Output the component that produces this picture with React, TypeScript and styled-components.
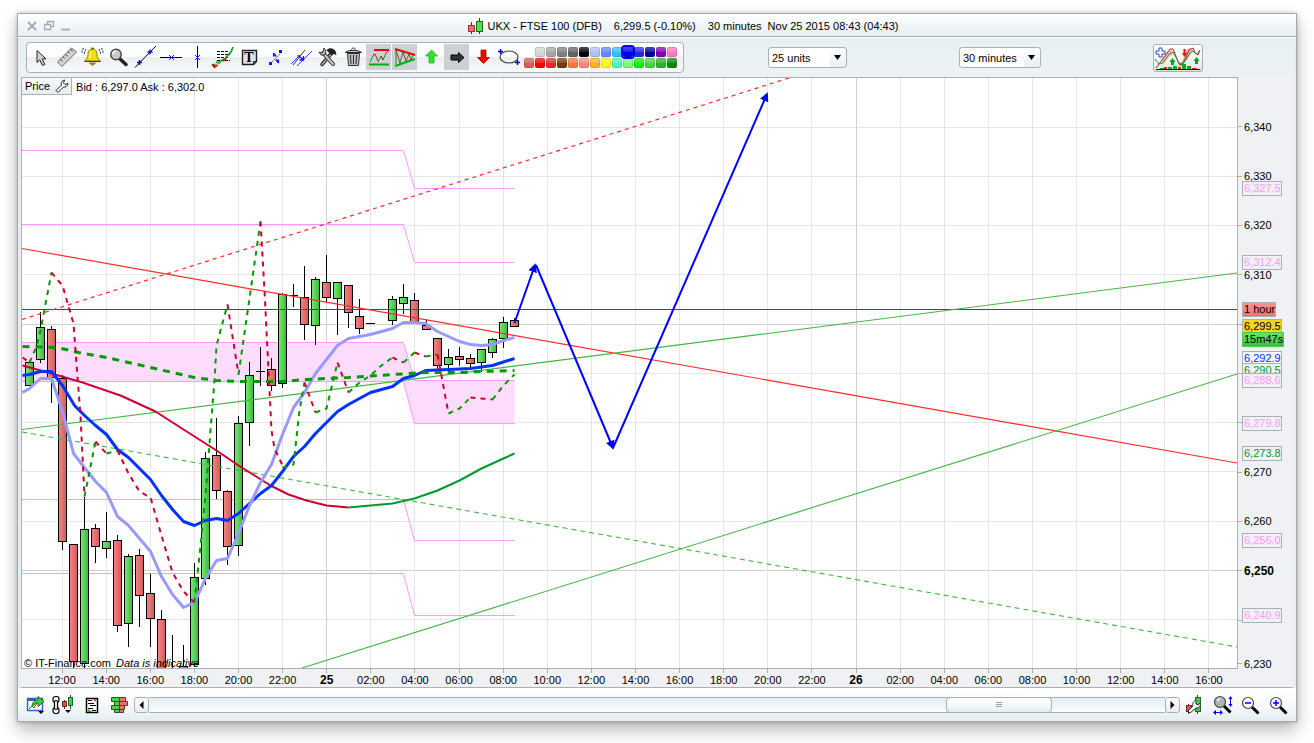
import React from "react";
import styled, { createGlobalStyle, css } from "styled-components";

const GlobalStyle = createGlobalStyle`
  *, *::before, *::after { box-sizing: border-box; }
  body { margin: 0; background: #fff; }
  body, button, select {
    font-family: "Liberation Sans", Arial, Helvetica, sans-serif;
    font-size: 11px;
    color: #000;
  }
`;

const line = "#abb0b4";

const Page = styled.div`
  padding: 13px 17px 21px;
`;

const Window = styled.main`
  border: 1px solid #a3a9ad;
  background: #e6eef2;
  padding: 0 3px;
  box-shadow: 0 0 4px rgba(0, 0, 0, 0.22), 0 8px 16px rgba(0, 0, 0, 0.28);
`;

const TitleBar = styled.header`
  display: flex;
  align-items: center;
  height: 24px;
  margin: 0 -3px;
  padding: 0 3px;
  background: linear-gradient(#ffffff, #e5eef2);
  border-bottom: 1px solid #fff;
  box-shadow: inset 0 -1px 0 ${line};
`;

const WindowControls = styled.div`
  display: flex;
  gap: 3px;
  padding-left: 6px;
`;

const ControlButton = styled.button`
  width: 14px;
  height: 14px;
  padding: 0;
  border: 0;
  background: none;
  svg { display: block; }
`;

const Title = styled.h1`
  flex: 1;
  display: flex;
  align-items: center;
  justify-content: center;
  margin: 0;
  padding-right: 2px;
  font-size: 11px;
  line-height: 16px;
  font-weight: 400;
  white-space: nowrap;
`;

const TitlePart = styled.span<{ $gap: number }>`
  margin-left: ${(p) => p.$gap}px;
`;

const ToolRow = styled.div`
  display: flex;
  align-items: center;
  padding: 4px 90px 4px 5px;
  background: linear-gradient(#e8f0f3, #edf1f3);
`;

const Toolbar = styled.div`
  display: flex;
  align-items: center;
  height: 31px;
  padding: 0 6px 1px 1px;
  border: 1px solid ${line};
  border-radius: 4px;
  background: linear-gradient(#ffffff 0, #fbfcfd 49%, #eceff1 50%, #f8f9fa 100%);
`;

const ToolButton = styled.button<{ $active?: boolean }>`
  width: 26px;
  height: 26px;
  padding: 0;
  border: 0;
  border-right: 1px solid transparent;
  background: ${(p) => (p.$active ? "#ccd0d5" : "none")};
  background-clip: padding-box;
  svg { display: block; }
`;

const Palette = styled.div`
  display: grid;
  gap: 1px;
  padding-left: 2px;
`;

const SwatchRow = styled.div`
  display: flex;
  justify-content: flex-end;
  gap: 1px;
`;

const Swatch = styled.button<{ $color: string; $selected?: boolean }>`
  width: 10px;
  height: 10px;
  padding: 0;
  border: 0;
  border-radius: 2px;
  background: linear-gradient(rgba(255, 255, 255, 0.3) 0, rgba(255, 255, 255, 0.14) 45%, rgba(255, 255, 255, 0) 50%)
    ${(p) => p.$color};
  box-shadow: inset 0 0 0 1px rgba(0, 0, 0, 0.13);
  ${(p) => p.$selected && css`outline: 2px solid ${p.$color}; z-index: 1;`}
`;

const SelectBox = styled.label<{ $gap: number; $width: number }>`
  display: grid;
  align-items: center;
  width: ${(p) => p.$width}px;
  height: 21px;
  margin-left: ${(p) => p.$gap}px;
  > * { grid-area: 1 / 1; }
  > svg { justify-self: end; pointer-events: none; margin-right: 5px; }
`;

const Select = styled.select`
  appearance: none;
  width: 100%;
  height: 21px;
  padding: 0 20px 0 3px;
  border: 1px solid ${line};
  border-radius: 3px;
  background: linear-gradient(#ffffff, #e6eff3) right / 16px 100% no-repeat #fff;
`;

const IndicatorButton = styled.button`
  width: 50px;
  height: 28px;
  margin-left: auto;
  padding: 0;
  border: 1px solid ${line};
  border-radius: 3px;
  background: linear-gradient(#ffffff, #f4f6f7 50%, #dfe2e4);
  svg { display: block; }
`;

const ChartArea = styled.section`
  display: grid;
  grid-template-columns: 1fr 55px;
  background: #eff1f4;
`;

const Plot = styled.div`
  position: relative;
  border: 1px solid ${line};
  background: #fff;
  > svg { display: block; width: 100%; height: auto; }
`;

const PriceHeader = styled.div`
  position: absolute;
  top: 0;
  left: 0;
  display: flex;
  align-items: center;
  gap: 4px;
`;

const PriceButton = styled.button`
  display: flex;
  align-items: center;
  gap: 5px;
  height: 17px;
  padding: 0 2px 0 3px;
  border: solid ${line};
  border-width: 0 1px 1px 0;
  background: linear-gradient(#f6f9fa, #e6eef2);
`;

const Copyright = styled.small`
  position: absolute;
  left: 2px;
  bottom: -2px;
  font-size: 11px;
  line-height: 14px;
  em { margin-left: 2px; }
`;

const PriceAxis = styled.div`
  position: relative;
  display: grid;
  grid-template-rows: repeat(11, 49fr) 38fr;
  padding: 25px 0 0;
  margin-bottom: -14px;
`;

const AxisPrice = styled.span<{ $strong?: boolean }>`
  display: flex;
  align-items: center;
  line-height: 12px;
  font-size: ${(p) => (p.$strong ? 12 : 11)}px;
  font-weight: ${(p) => (p.$strong ? 700 : 400)};
  &::before {
    content: "";
    width: 4px;
    height: 1px;
    margin-right: 2px;
    background: ${line};
  }
  &:last-child::before { background: none; }
`;

const tones = {
  pink: ["#ff99ff", "#eff1f4"],
  blue: ["#0033ff", "#f7f8fa"],
  green: ["#009933", "#eff1f4"],
  gold: ["#000", "#f6d51c"],
  red: ["#000", "linear-gradient(#ff9494, #ee7070)"],
  lime: ["#000", "linear-gradient(#66e466, #3cbf3c)"],
} as const;

const Tag = styled.span<{ $y: number; $tone: keyof typeof tones }>`
  position: absolute;
  left: 4px;
  top: ${(p) => ((p.$y - 77) / 606) * 100}%;
  height: 15px;
  padding: 0 0 0 1px;
  border: 1px solid ${(p) => (p.$tone === "lime" ? "#4cc84c" : line)};
  line-height: 13px;
  white-space: nowrap;
  color: ${(p) => tones[p.$tone][0]};
  background: ${(p) => tones[p.$tone][1]};
`;

const TimeAxis = styled.div`
  height: 19px;
  padding: 0 62px 0 19px;
  display: grid;
  grid-template-columns: repeat(27, 1fr);
  background: linear-gradient(#eff1f4, #eff1f4);
  border-bottom: 1px solid ${line};
`;

const Time = styled.span<{ $day?: boolean }>`
  display: flex;
  flex-direction: column;
  align-items: center;
  font-size: ${(p) => (p.$day ? 12 : 11)}px;
  font-weight: ${(p) => (p.$day ? 700 : 400)};
  line-height: 14px;
  &::before {
    content: "";
    width: 1px;
    height: 4px;
    background: ${line};
  }
`;

const BottomBar = styled.footer`
  display: flex;
  align-items: center;
  height: 33px;
  margin: 0 -3px;
  padding: 0 4px;
  background: linear-gradient(#ffffff, #f6f9fb 50%, #e4edf2);
`;

const BarButton = styled.button`
  width: 28px;
  height: 26px;
  padding: 0;
  border: 0;
  background: none;
  svg { display: block; }
`;

const Scrollbar = styled.div`
  flex: 1;
  display: flex;
  height: 16px;
`;

const Track = styled.div`
  flex: 1;
  display: grid;
  grid-template-columns: 797fr 106fr 113fr;
  border: solid ${line};
  border-width: 1px 0;
  background: linear-gradient(#e4edf2, #fafcfd);
`;

const ScrollButton = styled.button`
  display: grid;
  place-items: center;
  width: 15px;
  padding: 0;
  border: 1px solid ${line};
  border-radius: 3px;
  background: linear-gradient(#ffffff, #e8eff3);
`;

const Thumb = styled.button`
  grid-column: 2;
  display: grid;
  place-items: center;
  margin: -1px 0;
  padding: 0;
  border: 1px solid ${line};
  border-radius: 4px;
  background: linear-gradient(#ffffff, #f6f9fa 50%, #e6eef2);
`;

/* ---------- icons ---------- */

const Icon = ({ children, w = 26, h = 26 }: { children: React.ReactNode; w?: number; h?: number }) => (
  <svg width={w} height={h} viewBox={`0 0 ${w} ${h}`} fill="none" aria-hidden="true">
    {children}
  </svg>
);

const Cross = ({ x, y }: { x: number; y: number }) => (
  <path d={`M${x - 2.5} ${y - 2.5}l5 5m0-5l-5 5`} stroke="#2020f0" />
);

const Plus = ({ x, y }: { x: number; y: number }) => (
  <path d={`M${x - 2.5} ${y}h5M${x} ${y - 2.5}v5`} stroke="#0000f0" strokeWidth="1.4" />
);

const Lens = ({ x, y, fill = "#fff" }: { x: number; y: number; fill?: string }) => (
  <>
    <path d={`M${x + 4} ${y + 4}l6.500 6.500`} stroke="#000" strokeWidth="3" />
    <circle cx={x} cy={y} r="5.500" fill={fill} stroke="#444" strokeWidth="1.200" />
  </>
);

const tools: { name: string; active?: boolean; art: React.ReactNode }[] = [
  {
    name: "Pointer",
    art: <path d="M9 6.500v12l2.800-2.600 2.600 5.600 2.400-1.100-2.600-5.500h3.800z" fill="#d4d4d4" stroke="#222" />,
  },
  {
    name: "Ruler",
    art: (
      <>
        <path d="M3.500 18L17.500 4l5 4L8 22.500z" fill="#d2d2d2" stroke="#666" />
        <path d="M6.500 15.500l2 1.500M9 13l1.500 1M11.500 10.500l2 1.500M14 8l1.500 1M16.500 5.500l2 1.500" stroke="#333" />
      </>
    ),
  },
  {
    name: "Alert",
    art: (
      <>
        <path d="M12.500 5c3.500 0 4.500 2.500 4.500 5.500 0 3 1 4.500 3.500 6.500h-16C7 15 8 13.500 8 10.500 8 7.500 9 5 12.500 5z" fill="#f4e000" stroke="#8c7400" />
        <path d="M10.500 8c-.8 2-.4 4-1 6" stroke="#fffbb0" strokeWidth="1.500" />
        <rect x="11" y="3.500" width="3" height="2" rx="1" fill="#7c6400" />
        <path d="M4.500 17.500h16" stroke="#4c3c00" />
        <path d="M9.500 19h6l-3 2.500z" fill="#c8a400" stroke="#4c3c00" strokeWidth=".6" />
        <path d="M6 5L4.500 8v2M3.500 4L2 7v2M19 5l1.500 3v2M21.500 4L23 7v2" stroke="#222" strokeDasharray="2 1" />
      </>
    ),
  },
  {
    name: "Zoom",
    art: (
      <>
        <path d="M13.500 14.500l6.500 6" stroke="#222" strokeWidth="3.500" strokeLinecap="round" />
        <circle cx="10" cy="10.500" r="5.200" fill="#c6cace" stroke="#444" strokeWidth="1.400" />
        <path d="M7 10a3 3 0 013-3" stroke="#fff" strokeWidth="1.500" />
      </>
    ),
  },
  {
    name: "Trend line",
    art: (
      <>
        <path d="M3 23.500L24 2" stroke="#000" />
        <Plus x={7.5} y={18.5} />
        <Plus x={18} y={8} />
      </>
    ),
  },
  {
    name: "Horizontal line",
    art: (<><path d="M2 13.500h22" stroke="#000" /><Cross x={13.5} y={13.5} /></>),
  },
  {
    name: "Vertical line",
    art: (<><path d="M13.500 2v22" stroke="#000" /><Cross x={13.5} y={13.5} /></>),
  },
  {
    name: "Retracement",
    art: (
      <>
        <path d="M7 7.500h12M7 10.500h13M7 13.500h11M7 16.500h13" stroke="#000" strokeDasharray="3 1" />
        <path d="M2 21l2 1 1-2M6 19l2-2M8 20l4-4 3-1 3-4 3-3 2-5" stroke="#00a818" strokeWidth="1.700" />
        <path d="M2.500 20l2 3 3-2M13 17l3-2" stroke="#f00000" strokeWidth="2" />
      </>
    ),
  },
  {
    name: "Text",
    art: (
      <>
        <path d="M6.500 6.500h14v11l-3 3h-11z" fill="#e2e2e2" stroke="#222" strokeWidth="1.400" />
        <path d="M20.500 17.500h-3v3" stroke="#222" />
        <text x="13" y="18" textAnchor="middle" fontFamily="Liberation Serif, serif" fontWeight="700" fontSize="14" fill="#000">T</text>
      </>
    ),
  },
  {
    name: "Segment",
    art: (
      <>
        <path d="M8 20L20 8" stroke="#555" strokeDasharray="2 1" />
        <path d="M7 18h3v3H7zM17 6h3v3h-3z" fill="#1010f0" />
        <path d="M11.500 9v3h3M16.500 19v-3h-3M11.500 9l2.500 3M14 16l2.500 3" stroke="#1010f0" strokeWidth="1.200" />
      </>
    ),
  },
  {
    name: "Channel",
    art: (
      <>
        <path d="M5 21L17 6" stroke="#333" />
        <path d="M9 22L24 7M3 20l9-9" stroke="#4040f0" />
        <path d="M9.500 11.500l6 4M15.500 12v4h-4" stroke="#1010f0" strokeWidth="1.300" />
      </>
    ),
  },
  {
    name: "Settings",
    art: (
      <>
        <path d="M8 20.500L18.500 8" stroke="#222" strokeWidth="3.500" strokeLinecap="round" />
        <path d="M8 20.500L18 9" stroke="#aaa" strokeWidth="1.600" strokeLinecap="round" />
        <path d="M12.500 6c3-3 7-2 9 1l1 4-3-1-2 1.500z" fill="#222" />
        <path d="M9 9l10 11" stroke="#333" strokeWidth="4" strokeLinecap="round" />
        <path d="M9 9l10 11" stroke="#ccc" strokeWidth="2" strokeLinecap="round" />
        <path d="M5 8l2 3 4 0 1-4-2-3-1 4-2 1z" fill="#bbb" stroke="#333" />
      </>
    ),
  },
  {
    name: "Delete",
    art: (
      <>
        <path d="M7.500 9.500h12l-1 12h-10z" fill="#b8bcc0" stroke="#333" />
        <path d="M6 8.500c2-3 13-3 15 0z" fill="#d4d4d4" stroke="#222" strokeWidth="1.200" />
        <path d="M11.500 5.500c0-2 4-2 4 0M10.500 11l.5 9M13.500 11v9M16.500 11l-.5 9" stroke="#333" />
      </>
    ),
  },
  {
    name: "Show lines",
    active: true,
    art: (
      <>
        <path d="M8 6h15" stroke="#f00000" strokeWidth="2" />
        <path d="M3 20.500h20" stroke="#00b010" strokeWidth="2" />
        <path d="M4 18l3-6 1-1M12 18l3-6 2 4 3-7" stroke="#109020" />
        <path d="M7 11l2-1 3 7M15 12l2 4M20 9l2-2" stroke="#b02020" />
      </>
    ),
  },
  {
    name: "Show patterns",
    active: true,
    art: (
      <>
        <path d="M3 5l20 6" stroke="#f00000" strokeWidth="2" />
        <path d="M3 22l20-7" stroke="#00b010" strokeWidth="2" />
        <path d="M4 6l4 13M11 8l3 9M17 10l2 6" stroke="#c82020" />
        <path d="M8 19l3-11M14 17l3-7M19 16l2-5M4 20V6" stroke="#109020" />
      </>
    ),
  },
  {
    name: "Up arrow",
    art: <path d="M13.500 6l6 6h-3.500v7h-5v-7H7.500z" fill="#33e033" stroke="#22b422" strokeWidth=".8" />,
  },
  {
    name: "Right arrow",
    active: true,
    art: <path d="M20 13.500l-5.500 5V16H7v-5h7.500V8.500z" fill="#333" stroke="#000" />,
  },
  {
    name: "Down arrow",
    art: <path d="M13.500 19.500l-6-6H11V6h5v7.500h3.500z" fill="#f00000" stroke="#b40000" strokeWidth=".8" />,
  },
  {
    name: "Ellipse",
    art: (
      <>
        <ellipse cx="13" cy="13" rx="9" ry="6" stroke="#444" strokeWidth="1.200" />
        <Plus x={4.5} y={7.5} /><Plus x={21.5} y={18.5} />
      </>
    ),
  },
];

const topColors = ["#d4d4d4", "#a6a6a6", "#808080", "#636363", "#000000", "#b0c0fc", "#6488fc", "#38bcfc", "#0000f8", "#2828d8", "#0000a0", "#8000b8", "#fc78b8"];
const bottomColors = ["#dc5c5c", "#fa0000", "#e42c2c", "#7c3c00", "#fc7838", "#fc8880", "#fcb414", "#fcfc00", "#48fcb8", "#78fc78", "#00fa00", "#48d048", "#30b030", "#088c08"];

/* ---------- chart data, in plot coordinates ---------- */

const barX = (k: number) => Math.floor(62.16 + 11.026 * k);

type Candle = [bar: number, high: number, top: number, bottom: number, low: number, up: 0 | 1];

const candles: Candle[] = [
  [-3, 362, 362, 385, 385, 1], [-2, 312, 327, 359, 362, 1], [-1, 326, 329, 377, 402, 0],
  [0, 375, 378, 541, 549, 0], [1, 544, 544, 661, 669, 0], [2, 497, 529, 663, 668, 1],
  [3, 524, 528, 546, 562, 0], [4, 512, 541, 548, 557, 1], [5, 535, 540, 625, 631, 0],
  [6, 554, 556, 623, 646, 1], [7, 549, 555, 595, 626, 0], [8, 574, 593, 618, 646, 0],
  [9, 610, 619, 680, 680, 0], [10, 635, 672, 680, 680, 0], [11, 645, 666, 676, 676, 1],
  [12, 563, 577, 664, 665, 1], [13, 452, 458, 578, 584, 1], [14, 418, 455, 490, 498, 0],
  [15, 490, 491, 546, 564, 0], [16, 416, 423, 545, 555, 1], [17, 362, 375, 422, 445, 1],
  [18, 347, 371, 371, 385, 1], [19, 358, 369, 385, 390, 0], [20, 293, 294, 383, 387, 1],
  [21, 284, 295, 295, 306, 1], [22, 266, 297, 324, 339, 0], [23, 277, 279, 325, 344, 1],
  [24, 255, 282, 297, 301, 0], [25, 282, 282, 298, 334, 1], [26, 285, 285, 312, 327, 0],
  [27, 299, 316, 328, 333, 0], [28, 323, 323, 323, 323, 1], [30, 296, 299, 320, 324, 1],
  [31, 284, 297, 303, 313, 1], [32, 293, 300, 321, 322, 0], [33, 320, 325, 329, 329, 0],
  [34, 338, 338, 365, 369, 0], [35, 349, 357, 364, 369, 1], [36, 347, 356, 359, 365, 0],
  [37, 354, 358, 363, 367, 0], [38, 349, 349, 362, 371, 1], [39, 338, 339, 352, 357, 1],
  [40, 317, 322, 338, 347, 1], [41, 318, 320, 326, 326, 0],
];

const gridRows = [127, 176, 225, 274, 324, 373, 422, 471, 521, 570, 619];

const fastAverage = "22,392 29,388 40,378 51,378 62,411 73,453 84,467 95,481 106,492 117,516 128,525 139,538 150,551 161,576 172,594 183,607 194,602 205,578 216,560 227,558 238,533 249,505 260,482 271,464 282,434 293,407 304,392 315,373 326,359 337,345 348,338 370,334 392,328 403,322 414,322 425,323 437,331 448,336 459,341 470,344 481,345 492,344 503,340 514,337";
const slowAverage = "22,375 29,374 40,371 51,371 62,385 74,405 84,415 95,425 106,434 117,449 128,457 139,468 150,479 161,495 172,509 183,521 194,525 205,520 216,518 227,520 238,513 249,503 260,493 271,485 282,471 293,456 304,446 315,433 326,422 337,411 348,404 370,392 392,386 403,378 414,375 425,370 448,369 470,368 492,365 514,358";
const longFalling = "22,365 51,373 82,382 120,395 155,411 183,429 216,450 238,465 270,485 288,494 306,500 326,505 348,507";
const longRising = "348,507 392,503 414,498 437,490 459,480 481,468 503,458 514,453";
const midAverage = "22,346 57,347 78,352 106,357 150,367 172,372 194,377 216,380 238,381 282,381 304,379 348,377 392,374 425,372 460,372 481,371 514,370";

const oscillator: [rising: boolean, points: string][] = [
  [false, "22,357 29,362"],
  [true, "29,362 36,346 40,330 51,272"],
  [false, "51,272 55,277 62,285 73,323 75,350 80,415 84,496"],
  [true, "84,496 95,441"],
  [false, "95,441 106,453"],
  [true, "106,453 117,450"],
  [false, "117,450 128,473 139,491 150,497 161,535 172,572 183,591 194,602"],
  [true, "194,602 201,536 205,495 210,430 214,380 216,345 227,304"],
  [false, "227,304 238,374"],
  [true, "238,374 249,298 260,221"],
  [false, "260,221 264,290 268,370 271,430 274,448 282,465"],
  [true, "282,467 293,464 299,410 304,382"],
  [false, "304,382 315,412"],
  [true, "315,412 326,408 337,362"],
  [false, "337,362 348,392"],
  [true, "348,392 359,382 370,375 381,365 392,357"],
  [false, "392,357 403,362"],
  [true, "403,362 414,352"],
  [false, "414,352 425,356"],
  [true, "425,356 437,354"],
  [false, "437,354 448,413"],
  [true, "448,413 459,408 470,397"],
  [false, "470,397 492,399"],
  [true, "492,399 503,385 514,374"],
];

const PriceChart = () => (
  <svg viewBox="22 78 1215 590" role="img" aria-label="UKX 30 minute price chart">
    <defs>
      <linearGradient id="up"><stop offset="0" stopColor="#79ea79" /><stop offset="1" stopColor="#3cb83c" /></linearGradient>
      <linearGradient id="down"><stop offset="0" stopColor="#f58583" /><stop offset="1" stopColor="#d35a5a" /></linearGradient>
      <marker id="head" viewBox="0 0 10 10" refX="8" refY="5" markerWidth="9" markerHeight="9" markerUnits="userSpaceOnUse" orient="auto">
        <path d="M0 0l10 5-10 5z" fill="#0000ff" />
      </marker>
    </defs>
    <g shapeRendering="crispEdges">
      {gridRows.map((y) => (
        <path key={y} d={`M22 ${y + 0.5}H1237`} stroke={y === 324 || y === 570 ? "#cfcfcf" : "#e6e6e6"} />
      ))}
      {Array.from({ length: 27 }, (_, i) => (
        <path key={i} d={`M${barX(i * 4) + 0.5} 78V668`} stroke={i === 6 || i === 18 ? "#cfcfcf" : "#e6e6e6"} />
      ))}
    </g>
    <path d="M22 342.500H403L414 380.500H514.500V423.500H414L403 381.500H22z" fill="#fddcfd" />
    <g stroke="#ff99ff" fill="none">
      <path d="M22 342.500H403.500L414.500 380.500H514.500M22 381.500H403.500L414.500 423.500H514.500" />
      <path d="M22 150.500H403.500L414.500 188.500H514.500M22 224.500H403.500L414.500 262.500H514.500" />
      <path d="M22 499.500H403.500L414.500 540.500H514.500M22 573.500H403.500L414.500 615.500H514.500" />
    </g>
    <g shapeRendering="crispEdges" stroke="#000">
      {candles.map(([k, high, top, bottom, low, up]) => {
        const x = barX(k);
        return (
          <g key={k}>
            {low > high && <path d={`M${x + 0.5} ${high}V${low + 1}`} />}
            {bottom > top ? (
              <rect x={x - 3.5} y={top + 0.5} width="8" height={bottom - top} fill={up ? "url(#up)" : "url(#down)"} />
            ) : (
              <path d={`M${x - 4} ${top + 0.5}h9`} />
            )}
          </g>
        );
      })}
    </g>
    <g fill="none">
      <path d="M22 309.500H1237" stroke="#f00000" />
      <path d="M22 248.500L1237 463" stroke="#ff2a2a" strokeWidth="1.200" />
      <path d="M22 319.500L789 78" stroke="#ff2a2a" strokeWidth="1.200" strokeDasharray="4 4" />
      <g stroke="#44b544" strokeWidth="1.100">
        <path d="M22 429.500L1237 273M302 668L1237 374" />
        <path d="M22 432L1237 647" strokeDasharray="5 4" />
      </g>
      <g transform="translate(0.5 0.5)" strokeLinejoin="round">
        <polyline points={longFalling} stroke="#cc0033" strokeWidth="2" />
        <polyline points={longRising} stroke="#009933" strokeWidth="2" />
        <polyline points={slowAverage} stroke="#0033ff" strokeWidth="3" />
        <polyline points={fastAverage} stroke="#9999ff" strokeWidth="3" />
        <polyline points={midAverage} stroke="#009900" strokeWidth="3" strokeDasharray="7 6" />
        {oscillator.map(([rising, points]) => (
          <polyline key={points} points={points} stroke={rising ? "#009900" : "#cc0033"} strokeWidth="2" strokeDasharray="5 5" />
        ))}
      </g>
      <g stroke="#0000ff" strokeWidth="2">
        <path d="M514.500 323L535 265" markerEnd="url(#head)" />
        <path d="M536 265L613 448" markerEnd="url(#head)" />
        <path d="M613 448L767 94" markerEnd="url(#head)" />
      </g>
    </g>
  </svg>
);

const axisPrices = ["6,340", "6,330", "6,320", "6,310", "", "", "", "6,270", "6,260", "6,250", "", "6,230"];

const tags: [y: number, tone: keyof typeof tones, text: string][] = [
  [181, "pink", "6,327.5"],
  [255, "pink", "6,312.4"],
  [302, "red", "1 hour"],
  [319, "gold", "6,299.5"],
  [332, "lime", "15m47s"],
  [351, "blue", "6,292.9"],
  [363, "green", "6,290.5"],
  [373, "pink", "6,288.6"],
  [416, "pink", "6,279.8"],
  [446, "green", "6,273.8"],
  [533, "pink", "6,256.0"],
  [608, "pink", "6,240.9"],
];

const times = Array.from({ length: 27 }, (_, i) => {
  const hour = (12 + i * 2) % 24;
  if (hour === 0) return i < 12 ? "25" : "26";
  return `${String(hour).padStart(2, "0")}:00`;
});

const Caret = () => (
  <svg width="9" height="5" viewBox="0 0 9 5" aria-hidden="true"><path d="M1 0h7L4.500 5z" fill="#000" /></svg>
);

export default function App() {
  return (
    <Page>
      <GlobalStyle />
      <Window>
        <TitleBar>
          <WindowControls>
            <ControlButton aria-label="Close">
              <Icon w={14} h={14}><path d="M1 3l8 8m0-8l-8 8" stroke="#a3a8ac" strokeWidth="1.800" /></Icon>
            </ControlButton>
            <ControlButton aria-label="Restore">
              <Icon w={14} h={14}><path d="M3.500 5V2.500h6v5H7M.5 5.500h6v5h-6z" stroke="#a3a8ac" strokeWidth="1.300" /></Icon>
            </ControlButton>
            <ControlButton aria-label="Minimise">
              <Icon w={14} h={14}><path d="M0 10.500h9" stroke="#a3a8ac" strokeWidth="1.800" /></Icon>
            </ControlButton>
          </WindowControls>
          <Title>
            <Icon w={17} h={18}>
              <path d="M3.500 5v12" stroke="#801818" /><rect x=".5" y="8.500" width="6" height="6" fill="#ee6c70" stroke="#a03030" />
              <path d="M11.500 1v16" stroke="#0c500c" /><rect x="8.500" y="4.500" width="6" height="10" fill="#50e050" stroke="#147014" />
            </Icon>
            <TitlePart $gap={3}>UKX - FTSE 100 (DFB)</TitlePart>
            <TitlePart $gap={12}>6,299.5 (-0.10%)</TitlePart>
            <TitlePart $gap={12}>30 minutes</TitlePart>
            <TitlePart $gap={6}>Nov 25 2015 08:43 (04:43)</TitlePart>
          </Title>
        </TitleBar>

        <ToolRow>
          <Toolbar role="toolbar" aria-label="Drawing tools">
            {tools.map((t) => (
              <ToolButton key={t.name} aria-label={t.name} $active={t.active}>
                <Icon>{t.art}</Icon>
              </ToolButton>
            ))}
            <Palette>
              <SwatchRow>
                {topColors.map((c) => <Swatch key={c} aria-label={`Colour ${c}`} $color={c} $selected={c === "#0000f8"} />)}
              </SwatchRow>
              <SwatchRow>
                {bottomColors.map((c) => <Swatch key={c} aria-label={`Colour ${c}`} $color={c} />)}
              </SwatchRow>
            </Palette>
          </Toolbar>
          <SelectBox $gap={84} $width={79}>
            <Select aria-label="Units" defaultValue="25 units"><option>25 units</option></Select>
            <Caret />
          </SelectBox>
          <SelectBox $gap={112} $width={82}>
            <Select aria-label="Timeframe" defaultValue="30 minutes"><option>30 minutes</option></Select>
            <Caret />
          </SelectBox>
          <IndicatorButton aria-label="Indicators">
            <Icon w={48} h={26}>
              <path d="M7 15l6-8 4-2 3 4-4 2-7 8zM24 20l4-4 5-12 3-1 3 2-5 9-6 5-2 4z" fill="#f5b8b8" />
              <path d="M2 23l9-12 5-7h3l6 15 3 1 4-8 3-7 4-2 2 5 3 2 2-5" stroke="#b42020" />
              <path d="M1 14l4 5 4-1 6-9 4-2 6 11 4 1 7-11 3-2 3 3 4-3" stroke="#18a028" />
              <path d="M5 3h3v3h3v3H8v3H5V9H2V6h3z" stroke="#2050b0" fill="#fff" />
              <path d="M30.500 4v4" stroke="#e81010" strokeWidth="2" /><path d="M28 8h5l-2.500 4z" fill="#e81010" />
              <path d="M18.500 20v-4M42.500 19v-4" stroke="#10a010" strokeWidth="3" /><path d="M15.500 17h6l-3-4zM39.500 16h6l-3-4z" fill="#10a010" />
              <path d="M6 24v-1h4v1zM14 24v-2h4v2zM19 24v-3h4v3zM28 24v-5h4v5zM33 24v-3h4v3z" fill="#00b010" />
              <path d="M10 24v-2h3v2zM24 24v-2h3v2zM38 24v-1h5v1z" fill="#f02020" />
              <path d="M2 24.500h44" stroke="#000080" />
            </Icon>
          </IndicatorButton>
        </ToolRow>

        <ChartArea>
          <Plot>
            <PriceChart />
            <PriceHeader>
              <PriceButton>
                Price
                <Icon w={14} h={14}>
                  <path d="M1 11.500L6.500 6c-1-2.500.5-4.500 3-5l-1 3 1.500 1.500L13 4.500c0 2.500-2.500 4-4.500 3.500L3 13.500z" stroke="#222" fill="#fff" />
                </Icon>
              </PriceButton>
              <span>Bid : 6,297.0 Ask : 6,302.0</span>
            </PriceHeader>
            <Copyright>© IT-Finance.com <em>Data is indicative</em></Copyright>
          </Plot>
          <PriceAxis>
            {axisPrices.map((p, i) => <AxisPrice key={i} $strong={p === "6,250"}>{p}</AxisPrice>)}
            {tags.map(([y, tone, text]) => <Tag key={text} $y={y} $tone={tone}>{text}</Tag>)}
          </PriceAxis>
        </ChartArea>

        <TimeAxis>
          {times.map((t, i) => <Time key={i} $day={t.length === 2}>{t}</Time>)}
        </TimeAxis>

        <BottomBar>
          <BarButton aria-label="Export">
            <Icon w={28}>
              <path d="M5.500 6.500h15v12h-15z" fill="#fff" stroke="#3060c8" strokeWidth="1.400" />
              <path d="M6 8h8" stroke="#3060c8" strokeWidth="2" />
              <path d="M7 17l3-3 2 2 3-5" stroke="#e02020" />
              <path d="M10 15c0-5 3-7 6-7V4.500l6 5-6 5V11c-3 0-4 2-6 4z" fill="#38d048" stroke="#107818" />
              <path d="M16 19h6l-3 3z" fill="#000" />
            </Icon>
          </BarButton>
          <BarButton aria-label="Chart style">
            <Icon w={28}>
              <g fill="#fff" stroke="#000" strokeWidth="1.200">
                <rect x="3" y="4.500" width="6" height="6" rx="2.500" /><rect x="3" y="15.500" width="6" height="6" rx="2.500" />
                <rect x="4.500" y="8.500" width="3" height="9" rx="1.500" />
              </g>
              <path d="M14.500 8v9M20.500 3v14" stroke="#333" />
              <rect x="12.500" y="9.500" width="4" height="5" fill="#e84848" stroke="#902020" />
              <rect x="18.500" y="5.500" width="4" height="8" fill="#40d050" stroke="#107018" />
              <path d="M15 18h6l-3 3z" fill="#000" />
            </Icon>
          </BarButton>
          <BarButton aria-label="Report">
            <Icon w={28}>
              <path d="M8.500 6.500h11v14h-11z" fill="#fff" stroke="#000" strokeWidth="1.500" />
              <path d="M10 8.500h4M10 11.500h6M12 13.500h6M10 16.500h5M14 18.500h4" stroke="#000" strokeWidth="1.200" />
              <path d="M15 7h4l-2 3z" fill="#e04040" /><path d="M9 20l2-3 3 3z" fill="#20b030" />
            </Icon>
          </BarButton>
          <BarButton aria-label="Depth">
            <Icon w={28}>
              <path d="M5.500 5.500h8v4h-8zM8.500 9.500h5v4h-5zM5.500 13.500h8v4h-8zM8.500 17.500h5v3h-5z" fill="#48d048" stroke="#444" />
              <path d="M13.500 5.500h6v4h-6zM13.500 9.500h8v4h-8zM13.500 13.500h5v4h-5zM13.500 17.500h4v3h-4z" fill="#f07070" stroke="#444" />
            </Icon>
          </BarButton>
          <Scrollbar>
            <ScrollButton aria-label="Scroll left"><Icon w={5} h={8}><path d="M4.500 0v8L.5 4z" fill="#000" /></Icon></ScrollButton>
            <Track>
              <Thumb aria-label="Scroll position">
                <Icon w={7} h={7}><path d="M0 1.500h6M0 3.500h6M0 5.500h6" stroke="#999fa3" /></Icon>
              </Thumb>
            </Track>
            <ScrollButton aria-label="Scroll right"><Icon w={5} h={8}><path d="M.5 0v8l4-4z" fill="#000" /></Icon></ScrollButton>
          </Scrollbar>
          <BarButton aria-label="Candle settings">
            <Icon w={28}>
              <path d="M8.500 12v10M17.500 3v19" stroke="#333" />
              <rect x="6.500" y="13.500" width="5" height="6" fill="#e85050" stroke="#802020" />
              <rect x="15.500" y="5.500" width="5" height="14" fill="#48c850" stroke="#187020" />
              <path d="M8 19l5-5c-1-3 1-5 3-6v4l2 1 2-2c1 3-1 5-4 5L10 21z" fill="#fff" stroke="#333" />
            </Icon>
          </BarButton>
          <BarButton aria-label="Fit">
            <Icon w={28}>
              <Lens x={12} y={10} fill="#b0b4b8" />
              <path d="M9.500 9a2.500 2.500 0 012.500-2" stroke="#fff" strokeWidth="1.500" />
              <path d="M22.500 6v7M6 20.500h7" stroke="#0000f0" />
              <path d="M20.500 7l2-3 2 3zM20.500 12l2 3 2-3zM8 18l-3 2.500L8 23zM12 18l3 2.500-3 2.500z" fill="#0000f0" />
            </Icon>
          </BarButton>
          <BarButton aria-label="Zoom out">
            <Icon w={28}><Lens x={12} y={11} /><path d="M9 11h6" stroke="#0000f0" strokeWidth="1.500" /></Icon>
          </BarButton>
          <BarButton aria-label="Zoom in">
            <Icon w={28}><Lens x={12} y={11} /><path d="M9 11h6M12 8v6" stroke="#0000f0" strokeWidth="1.500" /></Icon>
          </BarButton>
        </BottomBar>
      </Window>
    </Page>
  );
}
